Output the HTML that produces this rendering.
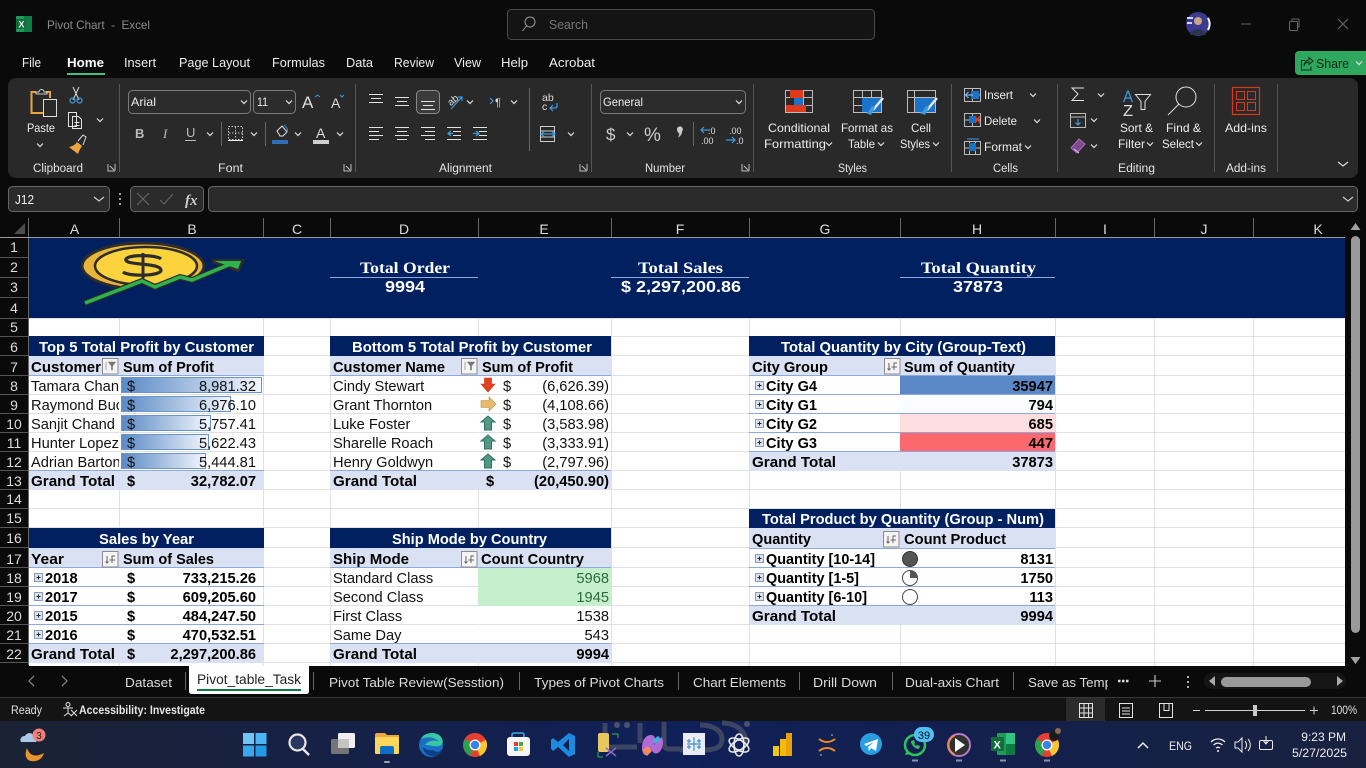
<!DOCTYPE html>
<html lang="en">
<head>
<meta charset="utf-8">
<title>Pivot Chart - Excel</title>
<style>
html,body{margin:0;padding:0;background:#0a0a0a;width:1366px;height:768px;overflow:hidden}
svg{display:block;position:absolute;left:0;top:0}
text{font-family:"Liberation Sans",Arial,sans-serif;white-space:pre}
.r{font-size:12px;fill:#ececec}
.l{font-size:11.5px;fill:#e4e4e4}
.c{font-size:14.67px;fill:#111}
.b{font-size:14.67px;fill:#000;font-weight:bold}
.t{font-size:14.67px;fill:#fff;font-weight:bold}
.n{font-size:14px;fill:#dcdcdc;text-anchor:middle}
.s{font-size:13px;fill:#dcdcdc}
.h{font-family:"Liberation Serif",serif;font-size:16px;font-weight:bold;fill:#fff;text-anchor:middle}
.e{text-anchor:end}
.ic{fill:none;stroke:#e2e2e2;stroke-width:1}
.bl{fill:none;stroke:#3d9be0;stroke-width:1.2}
</style>
</head>
<body>
<svg width="1366" height="768" viewBox="0 0 1366 768" xmlns="http://www.w3.org/2000/svg">
<defs>
<path id="ch" d="M-3-1.5 0 1.5 3-1.5" fill="none" stroke="#e0e0e0" stroke-width="1.2"/>
<g id="pl"><rect x=".5" y=".5" width="8" height="8" fill="#dbe3ee" stroke="#8a9bb0"/><path d="M2.5 4.5h4M4.5 2.5v4" stroke="#222" stroke-width="1"/></g>
<g id="fb"><rect x=".5" y=".5" width="15.500" height="15.500" fill="#f4f4f4" stroke="#8d8d8d"/><path d="M5 5v7M3.500 10.500 5 12l1.500-1.500M10 12V5h3M7.500 9H13" fill="none" stroke="#666" stroke-width="1"/></g>
<g id="ft"><rect x=".5" y=".5" width="15.500" height="15.500" fill="#f4f4f4" stroke="#8d8d8d"/><path d="M4 4v8M6.500 4h7l-3 4v4h-1V8z" fill="#777" stroke="#777" stroke-width=".6"/></g>
<g id="ar"><path d="M0 0-7 6h3.500v8h7V6H7z" fill="#4e9a85" stroke="#356f60" stroke-width="1"/></g>
<linearGradient id="db" x1="0" x2="1"><stop offset="0" stop-color="#5a8ac6"/><stop offset="1" stop-color="#f4f7fc"/></linearGradient>
<linearGradient id="tb" x1="0" x2="1"><stop offset="0" stop-color="#1b2234"/><stop offset=".5" stop-color="#102058"/><stop offset="1" stop-color="#18213f"/></linearGradient>
</defs>

<!-- title bar -->
<rect width="1366" height="768" fill="#0a0a0a"/>
<rect x="16" y="16" width="16" height="16" rx="1" fill="#1d9a58"/><rect x="24" y="16" width="8" height="16" fill="#107c41"/><rect x="16" y="19" width="10" height="10" fill="#0f6e3a"/>
<text x="18.500" y="27.500" style="font-size:9px;font-weight:bold;fill:#fff">X</text>
<text x="47" y="29" textLength="103" lengthAdjust="spacingAndGlyphs" style="font-size:12px;fill:#8c8c8c">Pivot Chart  -  Excel</text>
<rect x="507.500" y="9.500" width="367" height="30" rx="4" fill="#141414" stroke="#4a4a4a"/>
<circle cx="530" cy="22" r="5" class="ic" style="stroke:#9a9a9a"/><path d="M526.500 26 522.500 31" class="ic" style="stroke:#9a9a9a"/>
<text x="549" y="29" textLength="39" lengthAdjust="spacingAndGlyphs" style="font-size:13px;fill:#777">Search</text>
<circle cx="1198" cy="24" r="12" fill="#3c3a8f"/><circle cx="1198" cy="21" r="4" fill="#c9a58a"/><path d="M1190 35c1-8 15-8 16 0z" fill="#2b3350"/><path d="M1187 18h6M1187 23h5" stroke="#cfd8ff" stroke-width="2"/><path d="M1208 18a12 12 0 0 1 0 12" fill="none" stroke="#fff" stroke-width="2"/>
<path d="M1241 24h10" stroke="#555" stroke-width="1.200"/>
<rect x="1289.500" y="21.500" width="8" height="9" rx="1" fill="none" stroke="#666"/><path d="M1292 21v-2h6q1 0 1 1v7h-1" fill="none" stroke="#666"/>
<path d="M1338 19l10 10M1348 19l-10 10" stroke="#666" stroke-width="1.200"/>

<!-- menu tabs -->
<g style="font-size:13px;fill:#eee">
<text x="22" y="67" textLength="19" lengthAdjust="spacingAndGlyphs">File</text>
<text x="67" y="67" textLength="37" lengthAdjust="spacingAndGlyphs" style="font-weight:bold;fill:#fff">Home</text>
<text x="124" y="67" textLength="32" lengthAdjust="spacingAndGlyphs">Insert</text>
<text x="179" y="67" textLength="71" lengthAdjust="spacingAndGlyphs">Page Layout</text>
<text x="272" y="67" textLength="53" lengthAdjust="spacingAndGlyphs">Formulas</text>
<text x="346" y="67" textLength="27" lengthAdjust="spacingAndGlyphs">Data</text>
<text x="394" y="67" textLength="40" lengthAdjust="spacingAndGlyphs">Review</text>
<text x="454" y="67" textLength="27" lengthAdjust="spacingAndGlyphs">View</text>
<text x="501" y="67" textLength="27" lengthAdjust="spacingAndGlyphs">Help</text>
<text x="549" y="67" textLength="46" lengthAdjust="spacingAndGlyphs">Acrobat</text>
</g>
<rect x="67" y="73" width="38" height="2" fill="#3fc28a"/>
<rect x="1295" y="51" width="75" height="24" rx="4" fill="#2fa85f"/>
<path d="M1305 60.500h-3.500v9.500h9.500v-3.500M1304 66c0-3 2-6 5-6v-2.500l4 3.500-4 3.500V62c-2 0-4 1-5 4z" fill="none" stroke="#0c2a18" stroke-width="1"/>
<text x="1316" y="68" textLength="33" lengthAdjust="spacingAndGlyphs" style="font-size:13px;fill:#0c2a18">Share</text>
<use href="#ch" x="1359" y="63" style="stroke:#0c2a18"/>

<!-- ribbon -->
<rect x="8" y="78" width="1350" height="100" rx="8" fill="#292929"/>
<path d="M119.500 84v88M355.500 84v88M591.500 84v88M753.500 84v88M951.500 84v88M1057.500 84v88M1214.500 84v88M1277.500 84v88" stroke="#555"/>
<g class="l">
<text class="l" x="33" y="172" textLength="50" lengthAdjust="spacingAndGlyphs">Clipboard</text>
<text class="l" x="218" y="172" textLength="25" lengthAdjust="spacingAndGlyphs">Font</text>
<text class="l" x="439" y="172" textLength="53" lengthAdjust="spacingAndGlyphs">Alignment</text>
<text class="l" x="645" y="172" textLength="40" lengthAdjust="spacingAndGlyphs">Number</text>
<text class="l" x="838" y="172" textLength="29" lengthAdjust="spacingAndGlyphs">Styles</text>
<text class="l" x="993" y="172" textLength="25" lengthAdjust="spacingAndGlyphs">Cells</text>
<text class="l" x="1118" y="172" textLength="37" lengthAdjust="spacingAndGlyphs">Editing</text>
<text class="l" x="1226" y="172" textLength="40" lengthAdjust="spacingAndGlyphs">Add-ins</text>
</g>
<g class="ic" style="stroke:#bdbdbd">
<path d="M108 164v7h7M115 164v7M110 166l4 4"/><path d="M344 164v7h7M351 164v7M346 166l4 4"/><path d="M580 164v7h7M587 164v7M582 166l4 4"/><path d="M742 164v7h7M749 164v7M744 166l4 4"/>
</g>
<!-- clipboard -->
<path d="M36 92h-4.500v21H43" fill="none" stroke="#eda63d" stroke-width="2"/><path d="M46 92h4v6" fill="none" stroke="#eda63d" stroke-width="2"/>
<path d="M36 94v-2h3a2.500 2.500 0 0 1 5 0h3v2z" class="ic" style="stroke:#ccc"/>
<rect x="43.500" y="99.500" width="13" height="17" fill="#292929" stroke="#ddd"/>
<text class="r" x="27" y="132" textLength="28" lengthAdjust="spacingAndGlyphs">Paste</text>
<use href="#ch" x="40" y="145"/>
<path d="M73 87l6 13M79 87l-6 13" class="ic" style="stroke:#ddd"/><circle cx="72.500" cy="100.500" r="2.500" class="bl"/><circle cx="79.500" cy="100.500" r="2.500" class="bl"/>
<path d="M68.500 112.500h8v14h-8zM72.500 116.500h6l3 3v9h-9z" class="ic" style="fill:#292929"/><path d="M74.500 122.500h5M74.500 125.500h5" class="ic"/>
<use href="#ch" x="100" y="120"/>
<path d="M69 147c4-1 6-2 8-5l5 4c-2 3-3 5-4 8z" fill="#eda63d"/><path d="M78 141l5-6 3 2-3 8" fill="none" stroke="#ddd"/>
<!-- font -->
<rect x="128.500" y="90.500" width="122" height="23" rx="4" fill="#2c2c2c" stroke="#7a7a7a"/>
<text class="r" x="131" y="106" textLength="25" lengthAdjust="spacingAndGlyphs">Arial</text><use href="#ch" x="244" y="102"/>
<rect x="253.500" y="90.500" width="42" height="23" rx="4" fill="#2c2c2c" stroke="#7a7a7a"/>
<text class="r" x="257" y="106" textLength="11" lengthAdjust="spacingAndGlyphs">11</text><use href="#ch" x="289" y="102"/>
<text x="302" y="108" style="font-size:17px;fill:#ddd">A</text><path d="M315 97l2.500-2 2.500 2" fill="none" stroke="#3d9be0"/>
<text x="331" y="108" style="font-size:14px;fill:#ddd">A</text><path d="M340 95l2 2 2-2" fill="none" stroke="#3d9be0"/>
<text x="135" y="138" style="font-size:13px;font-weight:bold;fill:#bbb">B</text>
<text x="163" y="138" style="font-size:13px;font-style:italic;fill:#bbb;font-family:'Liberation Serif',serif">I</text>
<text x="186" y="137" style="font-size:13px;fill:#bbb">U</text><path d="M185 140.500h11" stroke="#bbb"/>
<use href="#ch" x="210" y="134"/><path d="M221.500 122v24M265.500 122v24" stroke="#666"/>
<rect x="228.500" y="126.500" width="14" height="13" fill="none" stroke="#ccc" stroke-dasharray="1.500 1.500"/><path d="M235.500 127v13M229 133h14" stroke="#bbb" stroke-dasharray="1.500 1.500"/><path d="M228 140.500h15" stroke="#eee"/>
<use href="#ch" x="254" y="134"/>
<path d="M277 131l5-5 5 6-4 4h-3z" class="ic"/><path d="M284 125c3 2 4 5 3 7" fill="none" stroke="#3d9be0"/><rect x="272" y="140" width="16" height="4" fill="#2f6db5"/>
<use href="#ch" x="298" y="134"/>
<text x="316" y="138" style="font-size:14px;fill:#ddd">A</text><rect x="313" y="140" width="16" height="4" fill="#cfcfcf"/><use href="#ch" x="340" y="134"/>
<!-- alignment -->
<path class="ic" d="M369 94.500h14M371 98.500h10M369 102.500h14M395 97.500h14M397 101.500h10M395 105.500h14"/>
<rect x="416.500" y="90.500" width="23" height="23" rx="4" fill="#3b3b3b" stroke="#8a8a8a"/>
<path class="ic" d="M421 101.500h14M423 105.500h10M421 109.500h14"/>
<text x="447" y="104" transform="rotate(-40 452 100)" style="font-size:10px;fill:#ddd">ab</text><path d="M451 109l11-12M458 97h4v4" class="bl"/>
<use href="#ch" x="470" y="102"/>
<path d="M490 98l3 3-3 3" class="bl"/><text x="495" y="106" style="font-size:11px;fill:#ddd">¶</text><use href="#ch" x="514" y="102"/>
<path d="M529.500 88v63" stroke="#666"/>
<text x="542" y="101" style="font-size:10.500px;fill:#ddd">ab</text><text x="542" y="110" style="font-size:10.500px;fill:#ddd">c</text><path d="M557 103v3q0 2-2 2h-5M553 105l-3 3 3 3" class="bl"/>
<path class="ic" d="M369 127.500h14M369 131.500h10M369 135.500h14M369 139.500h10M395 127.500h14M397 131.500h10M395 135.500h14M397 139.500h10M421 127.500h14M425 131.500h10M421 135.500h14M425 139.500h10"/>
<path class="ic" d="M447 127.500h14M453 131.500h8M453 135.500h8M447 139.500h14M473 127.500h14M479 131.500h8M479 135.500h8M473 139.500h14"/>
<path class="bl" d="M453 133.500h-5M451 131l-3 2.500 3 2.500M473 133.500h5M476 131l3 2.500-3 2.500"/>
<rect x="540.500" y="126.500" width="14" height="15" fill="none" stroke="#ccc"/><path d="M541 131h14M541 137h14" stroke="#ccc"/><path d="M541 134h14M544 131.500l-3 2.500 3 2.500M552 131.500l3 2.500-3 2.500" class="bl"/>
<use href="#ch" x="571" y="134"/>
<!-- number -->
<rect x="600.500" y="90.500" width="145" height="23" rx="4" fill="#2c2c2c" stroke="#7a7a7a"/>
<text class="r" x="603" y="106" textLength="40" lengthAdjust="spacingAndGlyphs">General</text><use href="#ch" x="739" y="102"/>
<text x="606" y="140" style="font-size:17px;fill:#ccc">$</text><use href="#ch" x="630" y="134"/>
<text x="644" y="141" style="font-size:19px;fill:#ccc">%</text>
<path d="M677 128.500a3 3 0 1 1 5 3c0 3-2 5-4 6 1-2 1.500-3 1-4.500-1.500 0-2-3-2-4.500z" fill="#ccc"/>
<path d="M693.500 122v24" stroke="#666"/>
<text x="708" y="134" style="font-size:9px;fill:#ddd">.0</text><text x="701" y="144" style="font-size:9px;fill:#ddd">.00</text><path d="M710 130h-9M704 127l-3 3 3 3" class="bl"/>
<text x="729" y="134" style="font-size:9px;fill:#ddd">.00</text><text x="736" y="144" style="font-size:9px;fill:#ddd">.0</text><path d="M726 140h9M732 137l3 3-3 3" class="bl"/>
<!-- styles -->
<path d="M785.500 90.500h27v22h-27zM794.500 90.500v22M803.500 90.500v22M785.500 97.500h27M785.500 105.500h27" class="ic" style="stroke:#bbb"/>
<rect x="790" y="90" width="13" height="8" fill="#e03a1c"/><rect x="794" y="98" width="9" height="7" fill="#1a73c8"/><rect x="786" y="105" width="20" height="7" fill="#e03a1c"/>
<path d="M853.500 90.500h28v22h-28zM862.500 90.500v22M871.500 90.500v22M853.500 97.500h28M853.500 105.500h28" class="ic" style="stroke:#bbb"/>
<rect x="862" y="98" width="19" height="14" fill="#1a73c8"/>
<path d="M883 98l-10 12" stroke="#e6e6e6" stroke-width="2.500"/><path d="M875 107l-4 8-5-2c3-1 4-4 6-7z" fill="#3d9be0"/>
<rect x="907.500" y="90.500" width="28" height="22" fill="none" stroke="#bbb"/><path d="M907.500 97.500h28M914.500 90.500v22" stroke="#bbb"/>
<rect x="915" y="98" width="20" height="14" fill="#1a73c8"/>
<path d="M937 98l-10 12" stroke="#e6e6e6" stroke-width="2.500"/><path d="M929 107l-4 8-5-2c3-1 4-4 6-7z" fill="#3d9be0"/>
<text class="r" x="768" y="132" textLength="62" lengthAdjust="spacingAndGlyphs">Conditional</text>
<text class="r" x="764" y="148" textLength="62" lengthAdjust="spacingAndGlyphs">Formatting</text><use href="#ch" x="829" y="144"/>
<text class="r" x="841" y="132" textLength="52" lengthAdjust="spacingAndGlyphs">Format as</text>
<text class="r" x="848" y="148" textLength="27" lengthAdjust="spacingAndGlyphs">Table</text><use href="#ch" x="881" y="144"/>
<text class="r" x="911" y="132" textLength="20" lengthAdjust="spacingAndGlyphs">Cell</text>
<text class="r" x="900" y="148" textLength="30" lengthAdjust="spacingAndGlyphs">Styles</text><use href="#ch" x="936" y="144"/>
<!-- cells -->
<path class="ic" style="stroke:#bbb" d="M964.500 88.500h16v13h-16zM964.500 95h16M972.500 88.500v13"/><rect x="971" y="91" width="8" height="8" fill="#1a73c8"/><path class="bl" d="M966 95h7M968.500 92l-3 3 3 3" style="stroke:#6db6f0"/>
<text class="r" x="984" y="99" textLength="29" lengthAdjust="spacingAndGlyphs">Insert</text><use href="#ch" x="1033" y="95"/>
<path class="ic" style="stroke:#bbb" d="M964.500 113.500h16v13h-16zM964.500 120h16M972.500 113.500v13"/><rect x="969" y="116" width="7" height="7" fill="#1a73c8"/><path d="M975 116l5 7M980 116l-5 7" stroke="#e03a1c" stroke-width="1.300"/>
<text class="r" x="984" y="125" textLength="33" lengthAdjust="spacingAndGlyphs">Delete</text><use href="#ch" x="1037" y="121"/>
<path class="ic" style="stroke:#bbb" d="M964.500 141.500h16v13h-16zM969.500 141.500v13M975.500 141.500v13M964.500 148h16"/><rect x="969" y="143" width="7" height="8" fill="#1a73c8"/><path d="M967 139h12" stroke="#3d9be0"/>
<text class="r" x="984" y="151" textLength="38" lengthAdjust="spacingAndGlyphs">Format</text><use href="#ch" x="1028" y="147"/>
<!-- editing -->
<path d="M1084 88h-12l6 6-6 6.500h12" class="ic"/><use href="#ch" x="1101" y="95"/>
<rect x="1070.500" y="113.500" width="15" height="14" class="ic" style="stroke:#bbb"/><path d="M1070 117h16" stroke="#bbb"/><path d="M1078 119v6M1075.500 122.500l2.500 2.500 2.500-2.500" class="bl"/><use href="#ch" x="1094" y="120"/>
<path d="M1071 148l8-9 6 5-8 9z" fill="#7e4a8c" stroke="#b06ac2"/><path d="M1074 149l5 4" stroke="#e6c8ee"/><use href="#ch" x="1094" y="146"/>
<text x="1123" y="102" textLength="10" lengthAdjust="spacingAndGlyphs" style="font-size:17px;fill:#3d9be0">A</text><text x="1123" y="116" textLength="10" lengthAdjust="spacingAndGlyphs" style="font-size:16px;fill:#ddd">Z</text>
<path d="M1135.500 94.500h15l-5.500 7v8h-4v-8z" class="ic"/>
<circle cx="1186" cy="97" r="10" class="ic"/><path d="M1179 104l-11 11" class="ic"/>
<text class="r" x="1120" y="132" textLength="33" lengthAdjust="spacingAndGlyphs">Sort &amp;</text>
<text class="r" x="1118" y="148" textLength="27" lengthAdjust="spacingAndGlyphs">Filter</text><use href="#ch" x="1150" y="144"/>
<text class="r" x="1166" y="132" textLength="35" lengthAdjust="spacingAndGlyphs">Find &amp;</text>
<text class="r" x="1162" y="148" textLength="32" lengthAdjust="spacingAndGlyphs">Select</text><use href="#ch" x="1199" y="144"/>
<rect x="1232.500" y="87.500" width="27" height="27" fill="none" stroke="#d83b1c" stroke-width="1.200"/>
<path d="M1236.500 91.500h8v8h-8zM1247.500 91.500h8v8h-8zM1236.500 102.500h8v8h-8zM1247.500 102.500h8v8h-8z" fill="none" stroke="#d83b1c"/>
<text class="r" x="1225" y="132" textLength="42" lengthAdjust="spacingAndGlyphs">Add-ins</text>
<path d="M1338 162l5 4 5-4" fill="none" stroke="#ddd" stroke-width="1.200"/>

<!-- formula bar -->
<rect x="8.500" y="186.500" width="101" height="25" rx="4" fill="#2b2b2b" stroke="#666"/>
<text x="15" y="204" textLength="19" lengthAdjust="spacingAndGlyphs" style="font-size:13px;fill:#eee">J12</text>
<path d="M94 197l5 4 5-4" fill="none" stroke="#ccc" stroke-width="1.200"/>
<circle cx="120" cy="194" r="1" fill="#ccc"/><circle cx="120" cy="199" r="1" fill="#ccc"/><circle cx="120" cy="204" r="1" fill="#ccc"/>
<rect x="130.500" y="186.500" width="73" height="25" rx="4" fill="#2b2b2b" stroke="#666"/>
<path d="M137 193l12 12M149 193l-12 12M160 200l4 4 9-10" fill="none" stroke="#666" stroke-width="1.100"/>
<text x="185" y="205" style="font-family:'Liberation Serif',serif;font-style:italic;font-weight:bold;font-size:15px;fill:#ccc">fx</text>
<rect x="208.500" y="186.500" width="1149" height="25" rx="4" fill="#2b2b2b" stroke="#666"/>
<path d="M1343 197l5 4 5-4" fill="none" stroke="#ccc" stroke-width="1.200"/>

<!-- sheet -->
<rect x="29" y="238" width="1316" height="428" fill="#fff"/>
<path d="M29 257.500H1345M29 277.500H1345M29 297.500H1345M29 318.500H1345M29 336.500H1345M29 355.500H1345M29 375.500H1345M29 394.500H1345M29 413.500H1345M29 432.500H1345M29 451.500H1345M29 470.500H1345M29 489.500H1345M29 508.500H1345M29 527.500H1345M29 547.500H1345M29 567.500H1345M29 586.500H1345M29 605.500H1345M29 624.500H1345M29 643.500H1345M29 662.500H1345M119.500 238V666M263.500 238V666M330.500 238V666M478.500 238V666M611.500 238V666M749.500 238V666M900.500 238V666M1055.500 238V666M1154.500 238V666M1253.500 238V666" stroke="#e0e0e0"/>
<!-- hide vertical gridlines inside pivot body rows -->
<path d="M119.500 376V470M478.500 376V470M900.500 376V451M119.500 568V643M478.500 568V643M900.500 549V605" stroke="#fff"/>
<!-- col headers -->
<path d="M28.500 218v447M119.500 218v19M263.500 218v19M330.500 218v19M478.500 218v19M611.500 218v19M749.500 218v19M900.500 218v19M1055.500 218v19M1154.500 218v19M1253.500 218v19" stroke="#666"/>
<path d="M0 237.500h1345" stroke="#9c9c9c"/>
<path d="M14 234l11-11v11z" fill="#4d4d4d"/>
<g style="font-size:14px;fill:#dcdcdc;text-anchor:middle">
<text x="74.500" y="234">A</text><text x="192" y="234">B</text><text x="297" y="234">C</text><text x="404" y="234">D</text><text x="544" y="234">E</text><text x="680" y="234">F</text><text x="825" y="234">G</text><text x="977" y="234">H</text><text x="1105" y="234">I</text><text x="1204" y="234">J</text><text x="1318" y="234">K</text>
</g>
<!-- row headers -->
<path d="M0 257.500h28M0 277.500h28M0 297.500h28M0 318.500h28M0 336.500h28M0 355.500h28M0 375.500h28M0 394.500h28M0 413.500h28M0 432.500h28M0 451.500h28M0 470.500h28M0 489.500h28M0 508.500h28M0 527.500h28M0 547.500h28M0 567.500h28M0 586.500h28M0 605.500h28M0 624.500h28M0 643.500h28M0 662.500h28" stroke="#555"/>
<g>
<text class="n" x="14" y="252">1</text><text class="n" x="14" y="272">2</text><text class="n" x="14" y="292">3</text><text class="n" x="14" y="313">4</text><text class="n" x="14" y="332">5</text><text class="n" x="14" y="352">6</text><text class="n" x="14" y="372">7</text><text class="n" x="14" y="391">8</text><text class="n" x="14" y="410">9</text><text class="n" x="14" y="429">10</text><text class="n" x="14" y="448">11</text><text class="n" x="14" y="467">12</text><text class="n" x="14" y="486">13</text><text class="n" x="14" y="504">14</text><text class="n" x="14" y="523">15</text><text class="n" x="14" y="543">16</text><text class="n" x="14" y="564">17</text><text class="n" x="14" y="583">18</text><text class="n" x="14" y="602">19</text><text class="n" x="14" y="621">20</text><text class="n" x="14" y="640">21</text><text class="n" x="14" y="659">22</text>
</g>

<!-- banner -->
<rect x="29" y="238" width="1316" height="80" fill="#002060"/>
<path d="M330 277.500h148M611 277.500h138M900 277.500h155" stroke="#8ea9db"/>
<text class="h" x="405" y="273" textLength="90" lengthAdjust="spacingAndGlyphs">Total Order</text>
<text class="h" x="405" y="292" textLength="40" lengthAdjust="spacingAndGlyphs" style="font-size:16px;font-family:'Liberation Sans',sans-serif">9994</text>
<text class="h" x="680.500" y="273" textLength="85" lengthAdjust="spacingAndGlyphs">Total Sales</text>
<text class="h" x="681" y="292" textLength="120" lengthAdjust="spacingAndGlyphs" style="font-size:15.500px;font-family:'Liberation Sans',sans-serif">$ 2,297,200.86</text>
<text class="h" x="978.500" y="273" textLength="115" lengthAdjust="spacingAndGlyphs">Total Quantity</text>
<text class="h" x="978" y="292" textLength="50" lengthAdjust="spacingAndGlyphs" style="font-size:16px;font-family:'Liberation Sans',sans-serif">37873</text>
<!-- logo -->
<ellipse cx="143" cy="266" rx="61" ry="23" fill="#e9b53a" stroke="#2d2d2d" stroke-width="3"/>
<ellipse cx="146" cy="266" rx="51" ry="19" fill="#fdd33d" stroke="#2d2d2d" stroke-width="2.500"/>
<path d="M80 304 142 283 155 289 180 279 192 282 230 265 230 318H80z" fill="#002060"/>
<path d="M143 253v29" stroke="#2d2d2d" stroke-width="3"/>
<path d="M161 259c-4-4-31-5-35 0-3 7 34 3 35 11 1 6-32 7-38 2" fill="none" stroke="#2d2d2d" stroke-width="3.200"/>
<path d="M85 303 142 281 155 287 180 277 192 280 233 263" fill="none" stroke="#2d2d2d" stroke-width="6"/>
<path d="M212 261h30l-4 9-26-9z" fill="#2d2d2d" stroke="#2d2d2d" stroke-width="4"/>
<path d="M85 303 142 281 155 287 180 277 192 280 233 263" fill="none" stroke="#2fb34b" stroke-width="3.500"/>
<path d="M214 261h27l-3 8z" fill="#2fb34b"/>

<!-- Top 5 -->
<rect x="29" y="336" width="235" height="20" fill="#002060"/>
<rect x="29" y="356" width="235" height="19" fill="#d9e1f2"/>
<rect x="29" y="470" width="235" height="20" fill="#d9e1f2"/>
<path d="M29 375.500h235M29 470.500h235" stroke="#8ea9db"/>
<text class="t" x="39" y="352" textLength="215" lengthAdjust="spacingAndGlyphs">Top 5 Total Profit by Customer</text>
<text class="b" x="31" y="372" textLength="70" lengthAdjust="spacingAndGlyphs">Customer</text><use href="#ft" x="102" y="358"/>
<text class="b" x="123" y="372" textLength="91" lengthAdjust="spacingAndGlyphs">Sum of Profit</text>
<rect x="121.500" y="377.500" width="140" height="15" fill="url(#db)" stroke="#6a94cc"/>
<rect x="121.500" y="396.500" width="109" height="15" fill="url(#db)" stroke="#6a94cc"/>
<rect x="121.500" y="415.500" width="89" height="15" fill="url(#db)" stroke="#6a94cc"/>
<rect x="121.500" y="434.500" width="87" height="15" fill="url(#db)" stroke="#6a94cc"/>
<rect x="121.500" y="453.500" width="84" height="15" fill="url(#db)" stroke="#6a94cc"/>
<svg x="29" y="375" width="90" height="96"><g class="c">
<text class="c" x="2" y="16">Tamara Chan</text><text class="c" x="2" y="35">Raymond Buch</text><text class="c" x="2" y="54">Sanjit Chand</text><text class="c" x="2" y="73">Hunter Lopez</text><text class="c" x="2" y="92">Adrian Barton</text></g></svg>
<text class="c" x="127" y="391">$</text><text class="c" x="127" y="410">$</text><text class="c" x="127" y="429">$</text><text class="c" x="127" y="448">$</text><text class="c" x="127" y="467">$</text>
<text class="c e" x="256" y="391">8,981.32</text><text class="c e" x="256" y="410">6,976.10</text><text class="c e" x="256" y="429">5,757.41</text><text class="c e" x="256" y="448">5,622.43</text><text class="c e" x="256" y="467">5,444.81</text>
<text class="b" x="31" y="486" textLength="84" lengthAdjust="spacingAndGlyphs">Grand Total</text><text class="b" x="127" y="486">$</text><text class="b e" x="256" y="486">32,782.07</text>

<!-- Bottom 5 -->
<rect x="330" y="336" width="281" height="20" fill="#002060"/>
<rect x="330" y="356" width="281" height="19" fill="#d9e1f2"/>
<rect x="330" y="470" width="281" height="20" fill="#d9e1f2"/>
<path d="M330 375.500h281M330 470.500h281" stroke="#8ea9db"/>
<text class="t" x="352" y="352" textLength="240" lengthAdjust="spacingAndGlyphs">Bottom 5 Total Profit by Customer</text>
<text class="b" x="333" y="372" textLength="112" lengthAdjust="spacingAndGlyphs">Customer Name</text><use href="#ft" x="461" y="358"/>
<text class="b" x="482" y="372" textLength="91" lengthAdjust="spacingAndGlyphs">Sum of Profit</text>
<text class="c" x="333" y="391">Cindy Stewart</text><text class="c" x="333" y="410">Grant Thornton</text><text class="c" x="333" y="429">Luke Foster</text><text class="c" x="333" y="448">Sharelle Roach</text><text class="c" x="333" y="467">Henry Goldwyn</text>
<path d="M488 392l7-8h-3.500v-6h-7v6H481z" fill="#e0421f" stroke="#c13716" stroke-width=".6"/>
<path d="M496 404l-7-7v3.500h-8v7h8v3.500z" fill="#e8b86d" stroke="#b98f4a" stroke-width=".6"/>
<use href="#ar" x="488" y="416"/><use href="#ar" x="488" y="435"/><use href="#ar" x="488" y="454"/>
<text class="c" x="503" y="391">$</text><text class="c" x="503" y="410">$</text><text class="c" x="503" y="429">$</text><text class="c" x="503" y="448">$</text><text class="c" x="503" y="467">$</text>
<text class="c e" x="609" y="391">(6,626.39)</text><text class="c e" x="609" y="410">(4,108.66)</text><text class="c e" x="609" y="429">(3,583.98)</text><text class="c e" x="609" y="448">(3,333.91)</text><text class="c e" x="609" y="467">(2,797.96)</text>
<text class="b" x="333" y="486" textLength="84" lengthAdjust="spacingAndGlyphs">Grand Total</text><text class="b" x="486" y="486">$</text><text class="b e" x="609" y="486">(20,450.90)</text>

<!-- City -->
<rect x="749" y="336" width="306" height="20" fill="#002060"/>
<rect x="749" y="356" width="306" height="19" fill="#d9e1f2"/>
<rect x="749" y="451" width="306" height="20" fill="#d9e1f2"/>
<rect x="900" y="375" width="155" height="19" fill="#5a87c5"/><rect x="900" y="394" width="155" height="19" fill="#fbfcff"/><rect x="900" y="413" width="155" height="19" fill="#fedde0"/><rect x="900" y="432" width="155" height="19" fill="#fb696e"/>
<path d="M749 375.500h306M749 394.500h306M749 413.500h306M749 432.500h306M749 451.500h306" stroke="#8ea9db"/>
<text class="t" x="781" y="352" textLength="245" lengthAdjust="spacingAndGlyphs">Total Quantity by City (Group-Text)</text>
<text class="b" x="752" y="372" textLength="76" lengthAdjust="spacingAndGlyphs">City Group</text><use href="#fb" x="884" y="358"/>
<text class="b" x="904" y="372" textLength="111" lengthAdjust="spacingAndGlyphs">Sum of Quantity</text>
<use href="#pl" x="755" y="381"/><use href="#pl" x="755" y="400"/><use href="#pl" x="755" y="419"/><use href="#pl" x="755" y="438"/>
<text class="b" x="766" y="391" textLength="51" lengthAdjust="spacingAndGlyphs">City G4</text><text class="b" x="766" y="410" textLength="51" lengthAdjust="spacingAndGlyphs">City G1</text><text class="b" x="766" y="429" textLength="51" lengthAdjust="spacingAndGlyphs">City G2</text><text class="b" x="766" y="448" textLength="51" lengthAdjust="spacingAndGlyphs">City G3</text>
<text class="b e" x="1053" y="391">35947</text><text class="b e" x="1053" y="410">794</text><text class="b e" x="1053" y="429">685</text><text class="b e" x="1053" y="448">447</text>
<text class="b" x="752" y="467" textLength="84" lengthAdjust="spacingAndGlyphs">Grand Total</text><text class="b e" x="1053" y="467">37873</text>

<!-- Total product -->
<rect x="749" y="509" width="306" height="19" fill="#002060"/>
<rect x="749" y="528" width="306" height="20" fill="#d9e1f2"/>
<rect x="749" y="605" width="306" height="20" fill="#d9e1f2"/>
<path d="M749 548.500h306M749 567.500h306M749 586.500h306M749 605.500h306" stroke="#8ea9db"/>
<text class="t" x="762" y="524" textLength="282" lengthAdjust="spacingAndGlyphs">Total Product by Quantity (Group - Num)</text>
<text class="b" x="752" y="544" textLength="59" lengthAdjust="spacingAndGlyphs">Quantity</text><use href="#fb" x="883" y="531"/>
<text class="b" x="904" y="544" textLength="102" lengthAdjust="spacingAndGlyphs">Count Product</text>
<use href="#pl" x="755" y="554"/><use href="#pl" x="755" y="573"/><use href="#pl" x="755" y="592"/>
<text class="b" x="766" y="564" textLength="109" lengthAdjust="spacingAndGlyphs">Quantity [10-14]</text><text class="b" x="766" y="583" textLength="93" lengthAdjust="spacingAndGlyphs">Quantity [1-5]</text><text class="b" x="766" y="602" textLength="101" lengthAdjust="spacingAndGlyphs">Quantity [6-10]</text>
<circle cx="910" cy="559" r="7.500" fill="#555" stroke="#333"/>
<circle cx="910" cy="578" r="7.500" fill="#fff" stroke="#444"/><path d="M910 578v-7.500a7.500 7.500 0 0 1 7.500 7.500z" fill="#555"/>
<circle cx="910" cy="597" r="7.500" fill="#fff" stroke="#444"/>
<text class="b e" x="1053" y="564">8131</text><text class="b e" x="1053" y="583">1750</text><text class="b e" x="1053" y="602">113</text>
<text class="b" x="752" y="621" textLength="84" lengthAdjust="spacingAndGlyphs">Grand Total</text><text class="b e" x="1053" y="621">9994</text>

<!-- Sales by year -->
<rect x="29" y="528" width="235" height="20" fill="#002060"/>
<rect x="29" y="548" width="235" height="19" fill="#d9e1f2"/>
<rect x="29" y="643" width="235" height="20" fill="#d9e1f2"/>
<path d="M29 567.500h235M29 586.500h235M29 605.500h235M29 624.500h235M29 643.500h235" stroke="#8ea9db"/>
<text class="t" x="99" y="544" textLength="95" lengthAdjust="spacingAndGlyphs">Sales by Year</text>
<text class="b" x="31" y="564" textLength="33" lengthAdjust="spacingAndGlyphs">Year</text><use href="#fb" x="102" y="551"/>
<text class="b" x="123" y="564" textLength="91" lengthAdjust="spacingAndGlyphs">Sum of Sales</text>
<use href="#pl" x="34" y="573"/><use href="#pl" x="34" y="592"/><use href="#pl" x="34" y="611"/><use href="#pl" x="34" y="630"/>
<text class="b" x="45" y="583">2018</text><text class="b" x="45" y="602">2017</text><text class="b" x="45" y="621">2015</text><text class="b" x="45" y="640">2016</text>
<text class="b" x="127" y="583">$</text><text class="b" x="127" y="602">$</text><text class="b" x="127" y="621">$</text><text class="b" x="127" y="640">$</text>
<text class="b e" x="256" y="583">733,215.26</text><text class="b e" x="256" y="602">609,205.60</text><text class="b e" x="256" y="621">484,247.50</text><text class="b e" x="256" y="640">470,532.51</text>
<text class="b" x="31" y="659" textLength="84" lengthAdjust="spacingAndGlyphs">Grand Total</text><text class="b" x="127" y="659">$</text><text class="b e" x="256" y="659">2,297,200.86</text>

<!-- Ship mode -->
<rect x="330" y="528" width="281" height="20" fill="#002060"/>
<rect x="330" y="548" width="281" height="19" fill="#d9e1f2"/>
<rect x="330" y="643" width="281" height="20" fill="#d9e1f2"/>
<rect x="478" y="568" width="133" height="38" fill="#c6efce"/>
<path d="M330 567.500h281M330 643.500h281" stroke="#8ea9db"/>
<text class="t" x="392" y="544" textLength="155" lengthAdjust="spacingAndGlyphs">Ship Mode by Country</text>
<text class="b" x="333" y="564" textLength="76" lengthAdjust="spacingAndGlyphs">Ship Mode</text><use href="#fb" x="461" y="551"/>
<text class="b" x="481" y="564" textLength="103" lengthAdjust="spacingAndGlyphs">Count Country</text>
<text class="c" x="333" y="583">Standard Class</text><text class="c" x="333" y="602">Second Class</text><text class="c" x="333" y="621">First Class</text><text class="c" x="333" y="640">Same Day</text>
<text class="c e" x="609" y="583" style="fill:#2c6a37">5968</text><text class="c e" x="609" y="602" style="fill:#2c6a37">1945</text><text class="c e" x="609" y="621">1538</text><text class="c e" x="609" y="640">543</text>
<text class="b" x="333" y="659" textLength="84" lengthAdjust="spacingAndGlyphs">Grand Total</text><text class="b e" x="609" y="659">9994</text>

<!-- scrollbar -->
<rect x="1345" y="218" width="21" height="448" fill="#0a0a0a"/>
<rect x="1351" y="236" width="9" height="397" rx="4.500" fill="#9a9a9a"/>
<path d="M1355.500 223l5 7h-10zM1355.500 664l5-7h-10z" fill="#a0a0a0"/>

<!-- sheet tabs -->
<rect x="0" y="666" width="1366" height="32" fill="#0a0a0a"/>
<rect x="0" y="697" width="1366" height="1" fill="#3a3a3a"/>
<path d="M34 676l-5 5 5 5M62 676l5 5-5 5" fill="none" stroke="#8a8a8a" stroke-width="1.200"/>
<path d="M189 666h120v25q0 3-3 3H192q-3 0-3-3z" fill="#fff"/>
<rect x="197" y="689" width="104" height="2" fill="#107c41"/>
<text x="197" y="684" textLength="104" lengthAdjust="spacingAndGlyphs" style="font-size:13.500px;fill:#222">Pivot_table_Task</text>
<g class="s">
<text class="s" x="125" y="687" textLength="47" lengthAdjust="spacingAndGlyphs">Dataset</text>
<text class="s" x="329" y="687" textLength="175" lengthAdjust="spacingAndGlyphs">Pivot Table Review(Sesstion)</text>
<text class="s" x="534" y="687" textLength="130" lengthAdjust="spacingAndGlyphs">Types of Pivot Charts</text>
<text class="s" x="693" y="687" textLength="93" lengthAdjust="spacingAndGlyphs">Chart Elements</text>
<text class="s" x="813" y="687" textLength="64" lengthAdjust="spacingAndGlyphs">Drill Down</text>
<text class="s" x="905" y="687" textLength="94" lengthAdjust="spacingAndGlyphs">Dual-axis Chart</text>
</g>
<svg x="1028" y="670" width="80" height="24"><text class="s" x="0" y="17" textLength="84" lengthAdjust="spacingAndGlyphs">Save as Temp</text></svg>
<path d="M185.500 672v18M313.500 672v18M519.500 672v18M678.500 672v18M799.500 672v18M892.500 672v18M1013.500 672v18" stroke="#666"/>
<path d="M1118 681h2.500m1.500 0h2.500m1.500 0h2.500" stroke="#ddd" stroke-width="2.500"/>
<path d="M1149 681h12M1155 675v12" stroke="#ccc" stroke-width="1.100"/>
<circle cx="1188" cy="677" r="1" fill="#ddd"/><circle cx="1188" cy="682" r="1" fill="#ddd"/><circle cx="1188" cy="687" r="1" fill="#ddd"/>
<rect x="1204" y="673" width="142" height="16" rx="8" fill="#151515"/>
<rect x="1221" y="677" width="90" height="10" rx="5" fill="#9a9a9a"/>
<path d="M1209 681l6-5v10zM1343 681l-6-5v10z" fill="#a8a8a8"/>

<!-- status bar -->
<rect x="0" y="698" width="1366" height="23" fill="#141414"/>
<text x="11" y="714" textLength="31" lengthAdjust="spacingAndGlyphs" style="font-size:11.500px;fill:#e0e0e0">Ready</text>
<circle cx="68" cy="704.500" r="2" class="ic"/><path d="M63 708h10M68 708v5l-4 3M68 713l4 3" class="ic"/><path d="M71 710l6 6M77 710l-6 6" class="ic"/>
<text x="79" y="714" textLength="126" lengthAdjust="spacingAndGlyphs" style="font-size:11.500px;font-weight:bold;fill:#e6e6e6">Accessibility: Investigate</text>
<rect x="1066" y="698" width="39" height="23" fill="#2b2b2b"/>
<path class="ic" d="M1079.500 703.500h13v14h-13zM1079.500 708h13M1079.500 713h13M1084 703.500v14M1088.500 703.500v14"/>
<path class="ic" d="M1119.500 703.500h13v14h-13zM1122 708h8M1122 711h8M1122 714h8"/>
<path class="ic" d="M1159.500 703.500h13v14h-13zM1164 703.500v7h5v-7"/>
<path d="M1193 710.500h7M1205 710.500h100M1310 710.500h8M1314 706.500v8" stroke="#d0d0d0"/>
<rect x="1253" y="705" width="4" height="11" fill="#c8c8c8"/>
<text x="1331" y="714" textLength="26" lengthAdjust="spacingAndGlyphs" style="font-size:11.500px;fill:#e0e0e0">100%</text>

<!-- taskbar -->
<rect x="0" y="721" width="1366" height="47" fill="url(#tb)"/>
<!-- watermark -->
<g fill="none" stroke="#3f4762" stroke-width="5" opacity=".95">
<path d="M605 723v18q0 6 6 6h26"/><path d="M640 723v20"/><path d="M664 722v22q0 5 5 5h18"/><path d="M700 725c12 0 22 5 22 14s-8 11-18 11h-24"/><path d="M722 723c14 0 24 8 24 20"/>
</g>
<circle cx="617" cy="725" r="3" fill="#4a5270"/><circle cx="627" cy="725" r="3" fill="#4a5270"/><circle cx="747" cy="724" r="3" fill="#4a5270"/>
<!-- weather -->
<path d="M27 748c2 7 8 10 17 5-2 7-8 9-13 8-5-1-7-6-4-13z" fill="#e8952c"/>
<path d="M21 742a4 4 0 0 1 4-6 5 5 0 0 1 9 0 3.500 3.500 0 0 1 2 6z" fill="#a9c7e8"/>
<circle cx="39" cy="735" r="6.500" fill="#f0807a"/><text x="39" y="739" style="font-size:10px;fill:#222;text-anchor:middle">3</text>
<!-- win -->
<rect x="243" y="733" width="11" height="11" fill="#6fc6f3"/><rect x="255.500" y="733" width="11" height="11" fill="#4ab6f2"/><rect x="243" y="745.500" width="11" height="11" fill="#36a8ee"/><rect x="255.500" y="745.500" width="11" height="11" fill="#1f9bea"/>
<!-- search -->
<circle cx="297.500" cy="742.500" r="8" fill="#2a3560" stroke="#e6e6e6" stroke-width="2.200"/><path d="M303 749l6 6" stroke="#e6e6e6" stroke-width="2.500"/>
<!-- task view -->
<rect x="338" y="733" width="17" height="15" rx="1.500" fill="#f0f0f0"/><rect x="331" y="739" width="18" height="15" rx="1.500" fill="#7a7a7a" opacity=".95"/><rect x="338" y="739" width="11" height="9" fill="#c4c4c4"/>
<!-- folder -->
<path d="M375 735q0-2 2-2h8l2 2h12v3h-24z" fill="#eaa93a"/><rect x="375" y="737" width="24" height="17" rx="1" fill="#ffd65a"/><path d="M380 754v-6q0-2 2-2h10q2 0 2 2v6z" fill="#0f6fc6"/>
<rect x="384" y="761" width="6" height="2" rx="1" fill="#9aa"/>
<!-- edge -->
<circle cx="431" cy="745" r="12" fill="#1b6fc2"/><path d="M421 739c3-7 16-8 20-2 3 4 2 8-2 9-5 1-8-1-14-1 3-4 9-6 14-3-4-5-12-6-18-3z" fill="#37c6a6"/><path d="M433 750c4 3 7 2 9-1-1 6-6 8-11 7-4-1-8-4-8-9 3 3 6 4 10 3z" fill="#0c3f86"/>
<!-- chrome -->
<circle cx="475" cy="745" r="12" fill="#e53f32"/><path d="M475 745 465 739a12 12 0 0 0 5 17z" fill="#2aa24b"/><path d="M475 745l5 11a12 12 0 0 0 7-11 12 12 0 0 0-1-5z" fill="#f8c630"/><circle cx="475" cy="745" r="5.500" fill="#fff"/><circle cx="475" cy="745" r="4.200" fill="#3b82e6"/>
<!-- store -->
<path d="M512 737v-2q0-2 2-2h8q2 0 2 2v2" fill="none" stroke="#35a9ec" stroke-width="1.500"/><rect x="507" y="737" width="23" height="19" rx="3" fill="#f5f5f5"/><rect x="514" y="742" width="4" height="4" fill="#e53f32"/><rect x="519" y="742" width="4" height="4" fill="#4fa83d"/><rect x="514" y="747" width="4" height="4" fill="#1f9bea"/><rect x="519" y="747" width="4" height="4" fill="#f8c630"/>
<!-- vscode -->
<path d="M569 733l6 3v18l-6 3-11-10-5 4-2-2v-9l2-2 5 4zm0 6-6 6 6 6z" fill="#1d8ae0"/>
<!-- snip -->
<rect x="598" y="733" width="11" height="19" rx="2" fill="#e8c760"/><path d="M612 734h6v4M598 757v-5M598 757h5" stroke="#2fb34b" fill="none"/><path d="M606 748l10 8M616 748l-10 8" stroke="#8a6ac8" stroke-width="1.500"/>
<!-- copilot -->
<path d="M642 748c0-8 4-13 9-13s5 6 3 10l8-8c2 5 1 13-4 16-4 2-6-2-7-4l-5 6c-2 1-4-3-4-7z" fill="#b06ad8"/><path d="M653 740l5-4 3 3-6 5z" fill="#35b5d8"/><path d="M642 750l6-4 4 5-5 5z" fill="#f28a5c"/>
<!-- tableau -->
<rect x="683" y="733" width="22" height="22" fill="#e9edf3"/>
<path d="M694 737v14M687 744h14M689 739v4M687 741h4M699 745v4M697 747h4M689 745v4M687 747h4M699 739v4M697 741h4" stroke="#4a8ec8" stroke-width="1.200"/>
<!-- openai -->
<g fill="none" stroke="#ececec" stroke-width="1.500"><circle cx="739" cy="745" r="5"/><ellipse cx="739" cy="745" rx="5" ry="11"/><ellipse cx="739" cy="745" rx="5" ry="11" transform="rotate(60 739 745)"/><ellipse cx="739" cy="745" rx="5" ry="11" transform="rotate(120 739 745)"/></g>
<!-- powerbi -->
<rect x="773" y="746" width="6" height="10" fill="#f2c811"/><rect x="780" y="739" width="6" height="17" fill="#f2b90e"/><rect x="786" y="733" width="6" height="23" fill="#e8a30a"/>
<!-- orange -->
<path d="M819 739c5 4 11 4 16 0M819 751c5-4 11-4 16 0" fill="none" stroke="#e98b23" stroke-width="2"/><circle cx="832" cy="735" r="1" fill="#889"/><circle cx="821" cy="755" r="1" fill="#889"/>
<!-- telegram -->
<circle cx="871" cy="744" r="11" fill="#2a9fe0"/><path d="M864 744l14-5-2 12-5-3-2 3-1-4 6-5-8 4z" fill="#fff"/>
<!-- whatsapp -->
<circle cx="915" cy="745" r="10" fill="none" stroke="#2fc25b" stroke-width="2.500"/><path d="M905 755l2-5 4 4z" fill="#2fc25b"/><path d="M911 741c0 4 4 8 8 8l1-3-3-1-1 1-2-2 1-1-1-3z" fill="#2fc25b"/>
<rect x="914" y="727" width="20" height="15" rx="7.500" fill="#4fc0f5"/><text x="924" y="739" style="font-size:11px;fill:#111;text-anchor:middle">39</text>
<!-- play -->
<circle cx="959" cy="745" r="11" fill="#2f2f2f" stroke="#b77ac8" stroke-width="2"/><path d="M948.500 745a10.500 10.500 0 0 1 6-9.500M948.500 745a10.500 10.500 0 0 0 6 9.500" fill="none" stroke="#e98b4a" stroke-width="2"/><path d="M955 738l10 7-10 7z" fill="#fff"/>
<!-- excel -->
<rect x="997" y="733" width="18" height="22" rx="1" fill="#1e9b5a"/><rect x="1006" y="733" width="9" height="11" fill="#33c481"/><rect x="1006" y="744" width="9" height="11" fill="#107c41"/><rect x="991" y="737" width="13" height="14" fill="#0f6e3a"/><text x="993.500" y="748.500" style="font-size:11px;font-weight:bold;fill:#fff">X</text>
<!-- chrome 2 -->
<circle cx="1047" cy="745" r="12" fill="#e53f32"/><path d="M1047 745l-10-6a12 12 0 0 0 5 17z" fill="#2aa24b"/><path d="M1047 745l5 11a12 12 0 0 0 7-11 12 12 0 0 0-1-5z" fill="#f8c630"/><circle cx="1047" cy="745" r="5.500" fill="#fff"/><circle cx="1047" cy="745" r="4.200" fill="#3b82e6"/><circle cx="1054" cy="736" r="5" fill="#1a1a1a"/><circle cx="1058" cy="731" r="3" fill="#8a6a55"/>
<path d="M912 760.500h6M956 760.500h6M1000 760.500h6M1044 760.500h6" stroke="#8a93a8" stroke-width="2"/>
<!-- tray -->
<path d="M1138 748l5-5 5 5" fill="none" stroke="#eee" stroke-width="1.500"/>
<text x="1169" y="750" textLength="23" lengthAdjust="spacingAndGlyphs" style="font-size:12px;fill:#eee">ENG</text>
<path d="M1211 742c4-4 10-4 14 0M1213.500 745c3-2.500 6-2.500 9 0M1216 748c1.500-1 2.500-1 4 0" fill="none" stroke="#eee" stroke-width="1.300"/><circle cx="1218" cy="751" r="1" fill="#eee"/>
<path d="M1235 742h3l4-4v14l-4-4h-3zM1245 741a6 6 0 0 1 0 8M1248 739a9 9 0 0 1 0 12" fill="none" stroke="#eee"/>
<rect x="1259.500" y="740.500" width="13" height="9" rx="1.500" fill="none" stroke="#eee"/><path d="M1266 736v8M1263.500 741l2.500 3 2.500-3" fill="none" stroke="#eee"/>
<text x="1346" y="741" class="e" style="font-size:12px;fill:#eee">9:23 PM</text>
<text x="1347" y="757" class="e" textLength="55" lengthAdjust="spacingAndGlyphs" style="font-size:12px;fill:#eee">5/27/2025</text>
</svg>
</body>
</html>
